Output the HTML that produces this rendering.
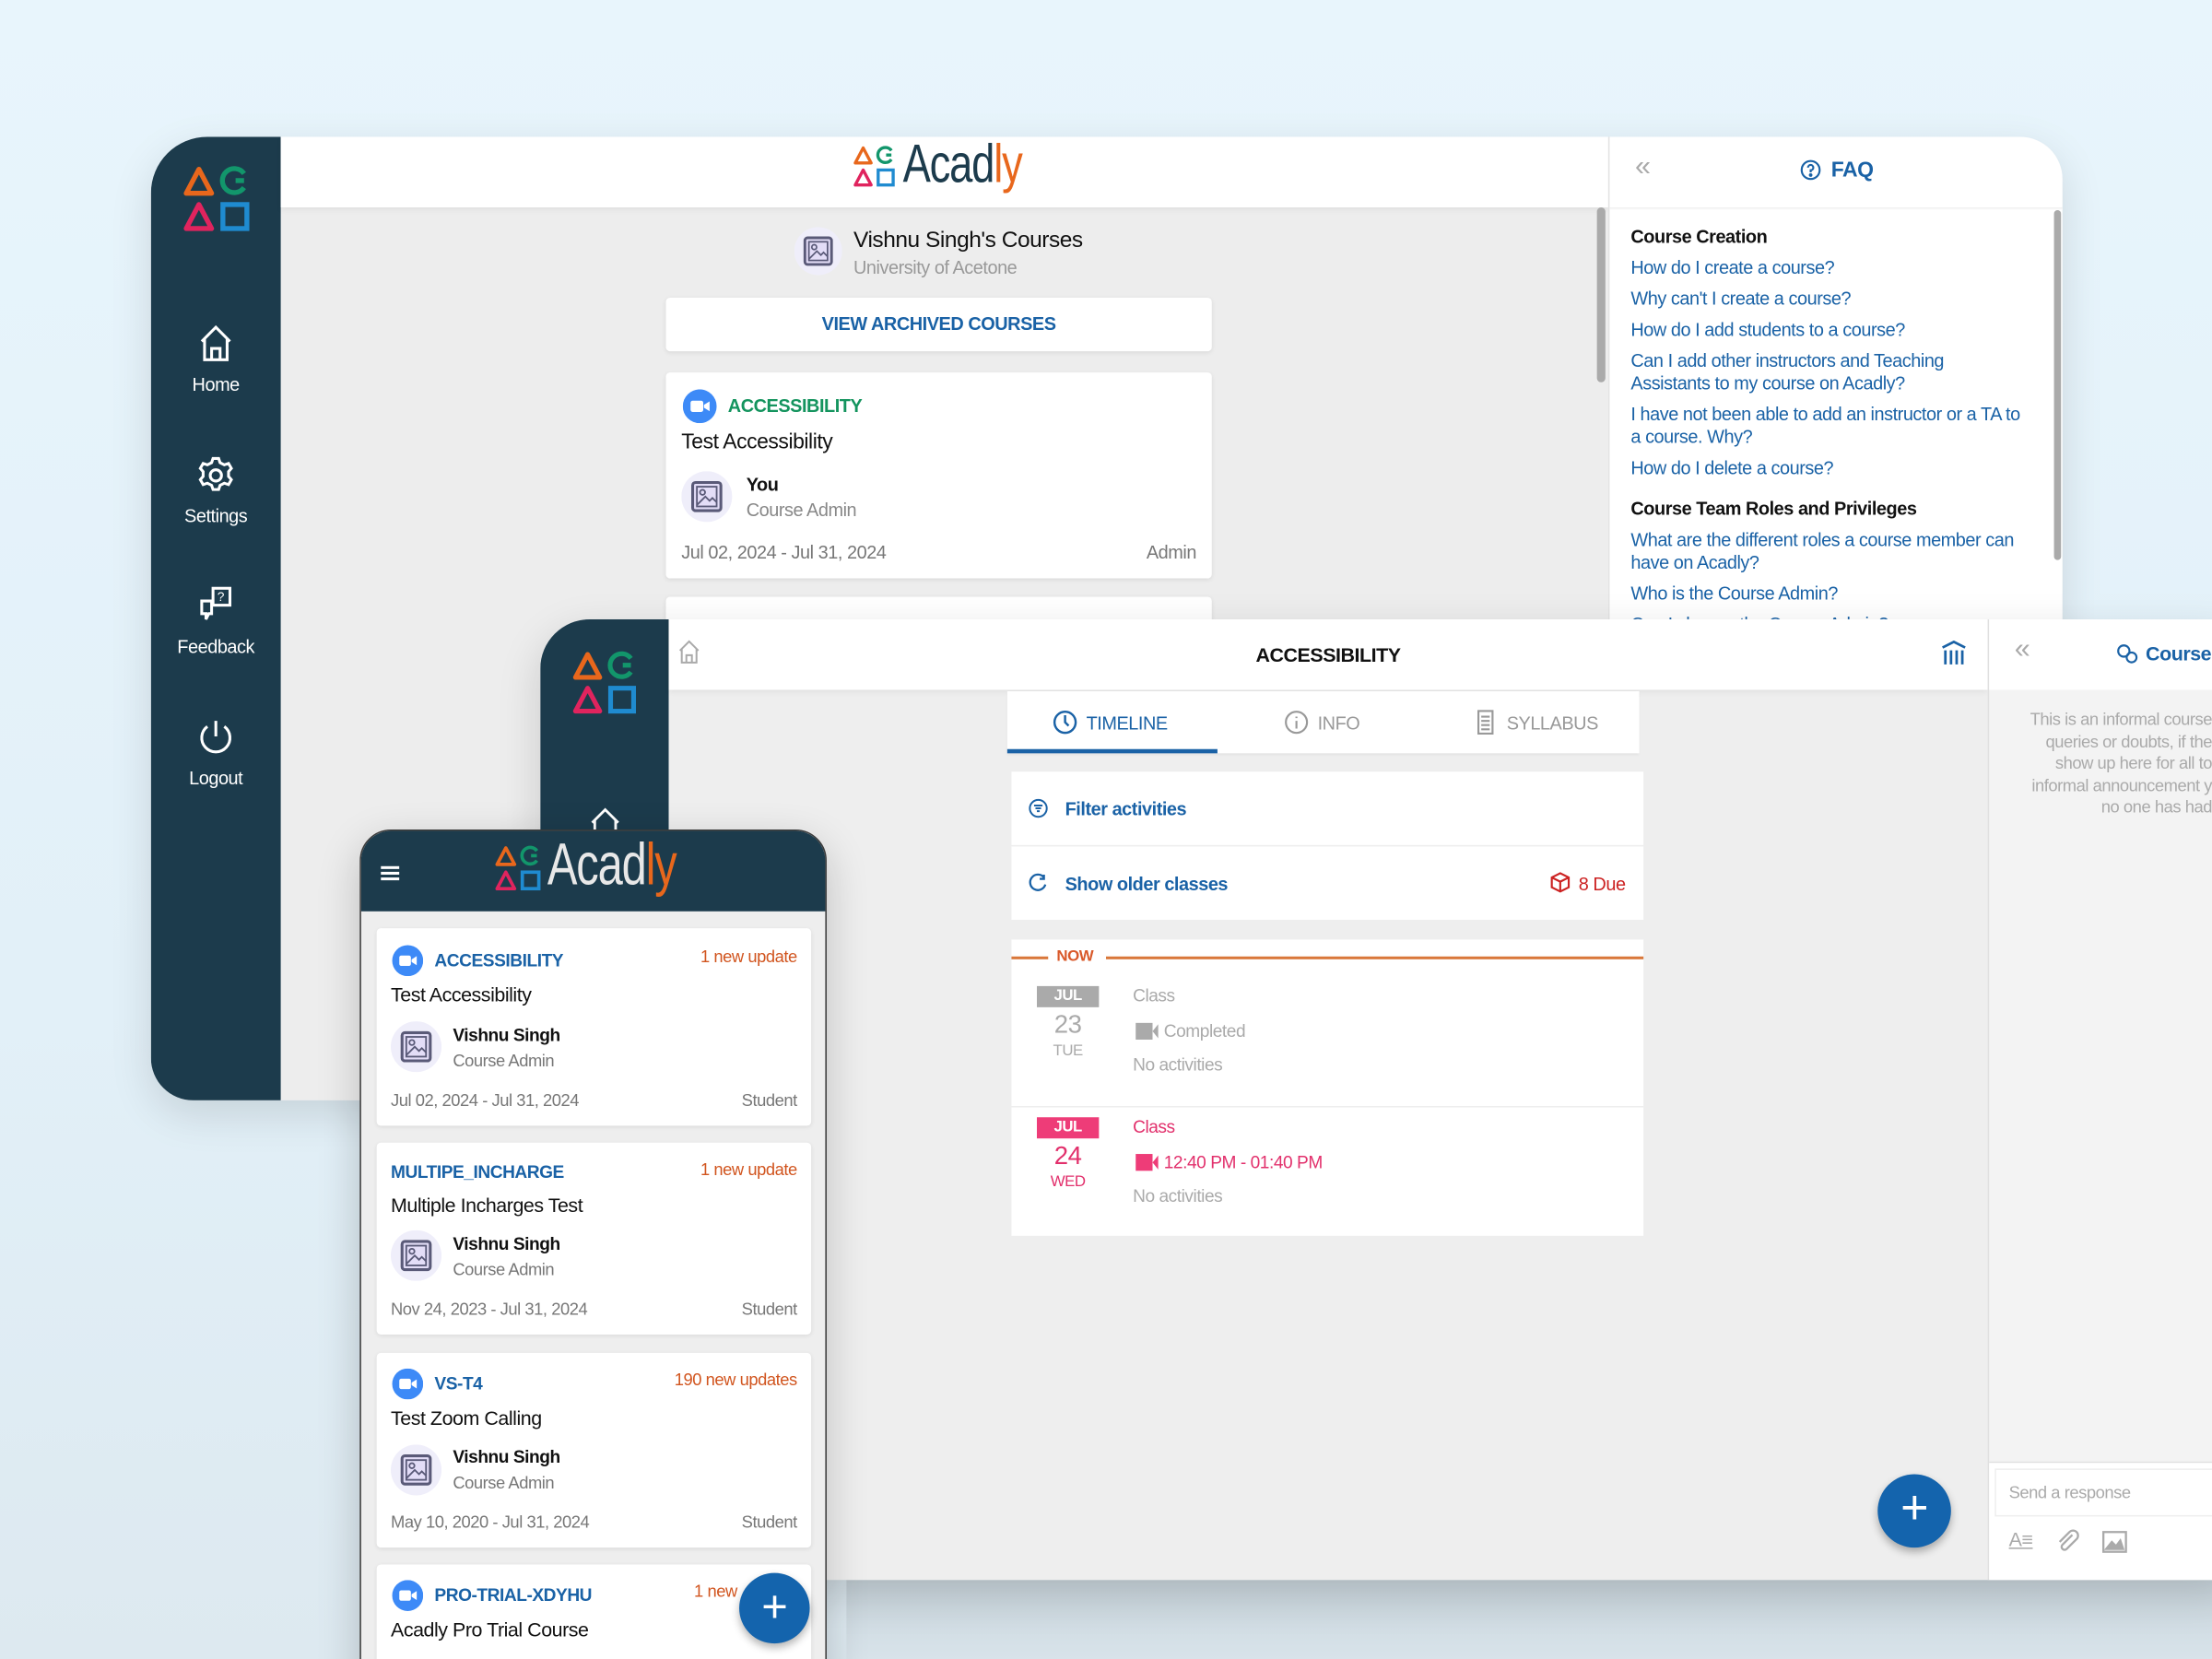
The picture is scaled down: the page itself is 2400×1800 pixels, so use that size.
<!DOCTYPE html>
<html><head><meta charset="utf-8">
<style>
*{margin:0;padding:0;box-sizing:border-box}
html,body{width:2400px;height:1800px;overflow:hidden}
body{background:linear-gradient(180deg,#e8f5fc 0%,#e2f0f8 60%,#dde9f0 100%);font-family:"Liberation Sans",sans-serif}
#s{position:absolute;left:0;top:0;width:1568px;height:1176px;overflow:hidden;transform:scale(1.530612);transform-origin:0 0}
.a{position:absolute}
.t{position:absolute;white-space:nowrap;letter-spacing:-.3px}
.blue{color:#1a62a6}
.card{position:absolute;background:#fff;border-radius:3px;box-shadow:0 1px 3px rgba(0,0,0,.08)}
.lbl{color:#fff;font-size:13px;width:92px;text-align:center}
.faq{position:absolute;left:15px;color:#1a62a6;font-size:13px;line-height:16px;width:282px;letter-spacing:-.3px}
.faqh{position:absolute;left:15px;color:#111;font-size:13px;font-weight:bold;letter-spacing:-.3px}
</style></head><body>
<svg width="0" height="0" style="position:absolute">
<defs>
<symbol id="logo" viewBox="0 0 48 48">
<path d="M11 3 L20 20 L2 20 Z" fill="none" stroke="#e8671c" stroke-width="3.5" stroke-linejoin="round"/>
<path d="M43 6 A8.5 8.5 0 1 0 43 16 M37 11 L43 11" fill="none" stroke="#12966b" stroke-width="3.5"/>
<path d="M11 28 L20 45 L2 45 Z" fill="none" stroke="#e0245e" stroke-width="3.5" stroke-linejoin="round"/>
<rect x="28" y="28" width="17" height="17" fill="none" stroke="#1f8bd0" stroke-width="3.5"/>
</symbol>
<symbol id="img" viewBox="0 0 36 36">
<circle cx="18" cy="18" r="18" fill="#efeefa"/>
<rect x="8" y="8" width="20" height="20" rx="2" fill="#e3ddf7" stroke="#5a5a78" stroke-width="2"/>
<rect x="11" y="11" width="14" height="14" fill="none" stroke="#5a5a78" stroke-width="1.2"/>
<circle cx="15" cy="15" r="1.8" fill="none" stroke="#5a5a78" stroke-width="1.2"/>
<path d="M11 24 L17 18 L20 21 L22 19 L25 22" fill="none" stroke="#5a5a78" stroke-width="1.2"/>
</symbol>
<symbol id="zoom" viewBox="0 0 24 24">
<circle cx="12" cy="12" r="12" fill="#3d8af7"/>
<rect x="5.5" y="8" width="9" height="8" rx="1.5" fill="#fff"/>
<path d="M15 11 L19 8.5 L19 15.5 L15 13 Z" fill="#fff"/>
</symbol>
</defs>
</svg>
<div id="s">
<div class="a" style="left:600px;top:1120px;width:968px;height:56px;background:linear-gradient(180deg,#c9d5dc,#d8e3ea)"></div>

<!-- BACK TABLET -->
<div class="a" style="left:107px;top:97px;width:1355px;height:683px;border-radius:40px 30px 0 30px;overflow:hidden;background:#ededed;box-shadow:0 10px 30px rgba(0,0,0,.12)">
  <div class="a" style="left:0;top:0;width:92px;height:683px;background:#1c3b4c"></div>
  <svg class="a" style="left:23px;top:20px" width="48" height="48"><use href="#logo"/></svg>
  <svg class="a" style="left:33px;top:133px" width="26" height="28" viewBox="0 0 26 28" fill="none" stroke="#fff" stroke-width="2"><path d="M3 12 L13 2 L23 12 M5 10 V25 H21 V10 M10 25 V17 H16 V25"/></svg>
  <div class="t lbl" style="left:0;top:168px">Home</div>
  <svg class="a" style="left:32px;top:226px" width="28" height="28" viewBox="0 0 28 28" fill="none" stroke="#fff" stroke-width="2"><circle cx="14" cy="14" r="4"/><path d="M12 2h4l1 3 3 1.5 3-1 2 3.5-2 2.3v3.4l2 2.3-2 3.5-3-1-3 1.5-1 3h-4l-1-3-3-1.5-3 1-2-3.5 2-2.3v-3.4l-2-2.3 2-3.5 3 1 3-1.5z"/></svg>
  <div class="t lbl" style="left:0;top:261px">Settings</div>
  <svg class="a" style="left:33px;top:318px" width="26" height="28" viewBox="0 0 26 28" fill="none" stroke="#fff" stroke-width="2"><rect x="11" y="2" width="12" height="12"/><path d="M3 11 H10 V20 H8 L6 24 V20 H3 Z"/><text x="14" y="11" font-size="9" fill="#fff" stroke="none" font-family="Liberation Sans">?</text></svg>
  <div class="t lbl" style="left:0;top:354px">Feedback</div>
  <svg class="a" style="left:33px;top:412px" width="26" height="28" viewBox="0 0 26 28" fill="none" stroke="#fff" stroke-width="2"><path d="M13 2 V13 M7 6 A10 10 0 1 0 19 6"/></svg>
  <div class="t lbl" style="left:0;top:447px">Logout</div>
  <div class="a" style="left:92px;top:0;width:941px;height:50px;background:#fff;box-shadow:0 2px 4px rgba(0,0,0,.06)"></div>
  <svg class="a" style="left:498px;top:6px" width="30" height="30"><use href="#logo"/></svg>
  <div class="t" style="left:533px;top:-1px;font-size:38px;color:#1c3b4c;letter-spacing:-1px;transform:scaleX(.78);transform-origin:0 0">Acad<span style="color:#e8671c">ly</span></div>
  <svg class="a" style="left:456px;top:64px" width="34" height="34"><use href="#img"/></svg>
  <div class="t" style="left:498px;top:65px;font-size:16px;color:#111">Vishnu Singh's Courses</div>
  <div class="t" style="left:498px;top:85px;font-size:13px;color:#999">University of Acetone</div>
  <div class="card" style="left:365px;top:114px;width:387px;height:38px"></div>
  <div class="t blue" style="left:365px;top:125px;width:387px;text-align:center;font-size:13px;font-weight:bold">VIEW ARCHIVED COURSES</div>
  <div class="card" style="left:365px;top:167px;width:387px;height:146px">
    <svg class="a" style="left:12px;top:12px" width="24" height="24"><use href="#zoom"/></svg>
    <div class="t" style="left:44px;top:16px;font-size:13px;font-weight:bold;color:#14945e">ACCESSIBILITY</div>
    <div class="t" style="left:11px;top:41px;font-size:15px;color:#111">Test Accessibility</div>
    <svg class="a" style="left:11px;top:70px" width="36" height="36"><use href="#img"/></svg>
    <div class="t" style="left:57px;top:72px;font-size:13px;font-weight:bold;color:#111">You</div>
    <div class="t" style="left:57px;top:90px;font-size:13px;color:#888">Course Admin</div>
    <div class="t" style="left:11px;top:120px;font-size:13px;color:#777">Jul 02, 2024 - Jul 31, 2024</div>
    <div class="t" style="right:11px;top:120px;font-size:13px;color:#777">Admin</div>
  </div>
  <div class="card" style="left:365px;top:326px;width:387px;height:60px"></div>
  <div class="a" style="left:1025px;top:50px;width:6px;height:124px;background:#aaa;border-radius:3px"></div>
  <div class="a" style="left:1033px;top:0;width:322px;height:683px;background:#fff;border-left:1px solid #e3e3e3">
    <div class="a" style="left:0;top:50px;width:322px;height:2px;background:linear-gradient(#eee,#fff)"></div>
    <div class="t" style="left:18px;top:10px;font-size:20px;color:#aaa">«</div>
    <svg class="a" style="left:135px;top:16px" width="15" height="15" viewBox="0 0 16 16" fill="none" stroke="#1a62a6" stroke-width="1.5"><circle cx="8" cy="8" r="6.8"/><path d="M6 6.2 A2 2 0 1 1 8 8.2 V9.8"/><circle cx="8" cy="11.8" r=".6" fill="#1a62a6"/></svg>
    <div class="t blue" style="left:157px;top:15px;font-size:15px;font-weight:bold">FAQ</div>
    <div class="faqh" style="top:63px">Course Creation</div>
    <div class="faq" style="top:85px">How do I create a course?</div>
    <div class="faq" style="top:107px">Why can't I create a course?</div>
    <div class="faq" style="top:129px">How do I add students to a course?</div>
    <div class="faq" style="top:151px">Can I add other instructors and Teaching<br>Assistants to my course on Acadly?</div>
    <div class="faq" style="top:189px">I have not been able to add an instructor or a TA to<br>a course. Why?</div>
    <div class="faq" style="top:227px">How do I delete a course?</div>
    <div class="faqh" style="top:256px">Course Team Roles and Privileges</div>
    <div class="faq" style="top:278px">What are the different roles a course member can<br>have on Acadly?</div>
    <div class="faq" style="top:316px">Who is the Course Admin?</div>
    <div class="faq" style="top:338px">Can I change the Course Admin?</div>
    <div class="a" style="left:315px;top:52px;width:5px;height:248px;background:#aaa;border-radius:3px"></div>
  </div>
</div>

<!-- FRONT TABLET -->
<div class="a" style="left:383px;top:439px;width:1200px;height:681px;border-radius:35px 0 0 0;overflow:hidden;background:#eeeeee;box-shadow:0 10px 30px rgba(0,0,0,.15)">
  <div class="a" style="left:0;top:0;width:91px;height:681px;background:#1c3b4c"></div>
  <svg class="a" style="left:23px;top:22px" width="46" height="46"><use href="#logo"/></svg>
  <svg class="a" style="left:34px;top:133px" width="24" height="26" viewBox="0 0 26 28" fill="none" stroke="#fff" stroke-width="2"><path d="M3 12 L13 2 L23 12 M5 10 V25 H21 V10"/></svg>
  <div class="a" style="left:91px;top:0;width:935px;height:50px;background:#fff;box-shadow:0 2px 4px rgba(0,0,0,.06)"></div>
  <svg class="a" style="left:97px;top:14px" width="17" height="19" viewBox="0 0 26 28" fill="none" stroke="#aaa" stroke-width="2"><path d="M3 12 L13 2 L23 12 M5 10 V25 H21 V10 M10 25 V17 H16 V25"/></svg>
  <div class="t" style="left:91px;top:17px;width:935px;text-align:center;font-size:14px;font-weight:bold;color:#111">ACCESSIBILITY</div>
  <svg class="a" style="left:993px;top:15px" width="18" height="18" viewBox="0 0 18 18" fill="none" stroke="#1a62a6" stroke-width="1.8"><path d="M1 5 L9 1 L17 5 M3 7 V17 M7 7 V17 M11 7 V17 M15 7 V17"/></svg>
  <div class="a" style="left:331px;top:51px;width:448px;height:44px;background:#fff;box-shadow:0 1px 2px rgba(0,0,0,.06)"></div>
  <div class="a" style="left:331px;top:92px;width:149px;height:3px;background:#1a62a6"></div>
  <svg class="a" style="left:363px;top:64px" width="18" height="18" viewBox="0 0 18 18" fill="none" stroke="#1a62a6" stroke-width="1.6"><circle cx="9" cy="9" r="7.5"/><path d="M9 4 V9 L11.5 11.5"/></svg>
  <div class="t blue" style="left:387px;top:66px;font-size:13px">TIMELINE</div>
  <svg class="a" style="left:527px;top:64px" width="18" height="18" viewBox="0 0 18 18" fill="none" stroke="#999" stroke-width="1.4"><circle cx="9" cy="9" r="7.5"/><path d="M9 8 V13.5 M9 5 V6"/></svg>
  <div class="t" style="left:551px;top:66px;font-size:13px;color:#999">INFO</div>
  <svg class="a" style="left:663px;top:64px" width="14" height="18" viewBox="0 0 14 18" fill="none" stroke="#999" stroke-width="1.4"><rect x="2" y="1" width="10" height="16"/><path d="M4 5 H10 M4 8 H10 M4 11 H10 M4 14 H10"/></svg>
  <div class="t" style="left:685px;top:66px;font-size:13px;color:#999">SYLLABUS</div>
  <div class="a" style="left:334px;top:108px;width:448px;height:52px;background:#fff"></div>
  <div class="a" style="left:334px;top:161px;width:448px;height:52px;background:#fff"></div>
  <svg class="a" style="left:346px;top:127px" width="14" height="14" viewBox="0 0 14 14" fill="none" stroke="#1a62a6" stroke-width="1.3"><circle cx="7" cy="7" r="6"/><path d="M4 5 H10 M5 7 H9 M6 9 H8"/></svg>
  <div class="t blue" style="left:372px;top:127px;font-size:13px;font-weight:bold">Filter activities</div>
  <svg class="a" style="left:346px;top:180px" width="14" height="14" viewBox="0 0 14 14" fill="none" stroke="#1a62a6" stroke-width="1.5"><path d="M11 3 A5.5 5.5 0 1 0 12 8 M11 1 V4 H8"/></svg>
  <div class="t blue" style="left:372px;top:180px;font-size:13px;font-weight:bold">Show older classes</div>
  <svg class="a" style="left:716px;top:179px" width="14" height="15" viewBox="0 0 14 15" fill="none" stroke="#cc2222" stroke-width="1.4"><path d="M7 1 L13 4 V11 L7 14 L1 11 V4 Z M1 4 L7 7 L13 4 M7 7 V14"/></svg>
  <div class="t" style="left:736px;top:180px;font-size:13px;color:#cc2222">8 Due</div>
  <div class="a" style="left:334px;top:227px;width:448px;height:210px;background:#fff"></div>
  <div class="a" style="left:334px;top:239px;width:26px;height:1.5px;background:#d9773a"></div>
  <div class="t" style="left:366px;top:233px;font-size:11px;font-weight:bold;color:#d9592a">NOW</div>
  <div class="a" style="left:401px;top:239px;width:381px;height:1.5px;background:#d9773a"></div>
  <div class="a" style="left:352px;top:260px;width:44px;height:15px;background:#aaa"></div>
  <div class="t" style="left:352px;top:261px;width:44px;text-align:center;font-size:11px;color:#fff;font-weight:bold">JUL</div>
  <div class="t" style="left:352px;top:277px;width:44px;text-align:center;font-size:18px;color:#aaa">23</div>
  <div class="t" style="left:352px;top:300px;width:44px;text-align:center;font-size:11px;color:#aaa">TUE</div>
  <div class="t" style="left:420px;top:260px;font-size:12.5px;color:#aaa">Class</div>
  <svg class="a" style="left:422px;top:286px" width="18" height="12" viewBox="0 0 18 12"><rect x="0" y="0" width="12" height="12" fill="#aaa"/><path d="M12 6 L16 1 V11 Z" fill="#aaa"/></svg>
  <div class="t" style="left:442px;top:285px;font-size:12.5px;color:#aaa">Completed</div>
  <div class="t" style="left:420px;top:309px;font-size:12.5px;color:#aaa">No activities</div>
  <div class="a" style="left:334px;top:345px;width:448px;height:1px;background:#eee"></div>
  <div class="a" style="left:352px;top:353px;width:44px;height:15px;background:#ee3c78"></div>
  <div class="t" style="left:352px;top:354px;width:44px;text-align:center;font-size:11px;color:#fff;font-weight:bold">JUL</div>
  <div class="t" style="left:352px;top:370px;width:44px;text-align:center;font-size:18px;color:#e2306c">24</div>
  <div class="t" style="left:352px;top:393px;width:44px;text-align:center;font-size:11px;color:#e2306c">WED</div>
  <div class="t" style="left:420px;top:353px;font-size:12.5px;color:#e2306c">Class</div>
  <svg class="a" style="left:422px;top:379px" width="18" height="12" viewBox="0 0 18 12"><rect x="0" y="0" width="12" height="12" fill="#ee3c78"/><path d="M12 6 L16 1 V11 Z" fill="#ee3c78"/></svg>
  <div class="t" style="left:442px;top:378px;font-size:12.5px;color:#e2306c">12:40 PM - 01:40 PM</div>
  <div class="t" style="left:420px;top:402px;font-size:12.5px;color:#aaa">No activities</div>
  <div class="a" style="left:948px;top:606px;width:52px;height:52px;border-radius:50%;background:#1464ad;box-shadow:0 3px 6px rgba(0,0,0,.3)"></div>
  <div class="t" style="left:948px;top:610px;width:52px;text-align:center;font-size:34px;color:#fff;line-height:40px">+</div>
  <div class="a" style="left:1026px;top:0;width:180px;height:681px;background:#f3f3f3;border-left:1px solid #e0e0e0">
    <div class="a" style="left:0;top:0;width:180px;height:50px;background:#fff"></div>
    <div class="t" style="left:18px;top:10px;font-size:20px;color:#aaa">«</div>
    <svg class="a" style="left:90px;top:17px" width="16" height="15" viewBox="0 0 16 15" fill="none" stroke="#1a62a6" stroke-width="1.4"><circle cx="5.5" cy="5.5" r="4"/><circle cx="11" cy="10" r="3.5"/></svg>
    <div class="t blue" style="left:111px;top:16px;font-size:14px;font-weight:bold">Course</div>
    <div class="t" style="right:21px;top:64px;font-size:12px;line-height:15.5px;color:#aaa;text-align:right">This is an informal course<br>queries or doubts, if the<br>show up here for all to<br>informal announcement y<br>no one has had</div>
    <div class="a" style="left:0;top:597px;width:180px;height:84px;background:#fff;border-top:1px solid #e0e0e0"></div>
    <div class="a" style="left:4px;top:602px;width:176px;height:34px;border:1px solid #eee;background:#fff"></div>
    <div class="t" style="left:14px;top:612px;font-size:12px;color:#aaa">Send a response</div>
    <div class="t" style="left:14px;top:644px;font-size:14px;color:#aaa;text-decoration:underline">A&#8801;</div>
    <svg class="a" style="left:47px;top:645px" width="18" height="18" viewBox="0 0 18 18" fill="none" stroke="#aaa" stroke-width="1.5"><path d="M12 4 L5 11 A2 2 0 0 0 8 14 L15 7 A3.5 3.5 0 0 0 10 2 L3 9"/></svg>
    <svg class="a" style="left:80px;top:646px" width="18" height="16" viewBox="0 0 18 16" fill="none" stroke="#aaa" stroke-width="1.5"><rect x="1" y="1" width="16" height="14"/><path d="M3 13 L7 8 L10 11 L13 7 L15 13 Z" fill="#aaa"/></svg>
  </div>
</div>

<!-- PHONE -->
<div class="a" style="left:255px;top:588px;width:331px;height:620px;border-radius:22px;overflow:hidden;background:#eeeeee;border:1.5px solid #3a3a3a;box-shadow:0 10px 30px rgba(0,0,0,.2)">
  <div class="a" style="left:0;top:0;width:331px;height:57px;background:#1c3b4c"></div>
  <div class="a" style="left:14px;top:25px;width:13px;height:2px;background:#fff;box-shadow:0 4px 0 #fff,0 8px 0 #fff"></div>
  <svg class="a" style="left:95px;top:10px" width="33" height="33"><use href="#logo"/></svg>
  <div class="t" style="left:132px;top:0px;font-size:42px;color:#e8e8e8;transform:scaleX(.76);transform-origin:0 0;letter-spacing:-1px">Acad<span style="color:#e8671c">ly</span></div>
  <div class="card" style="left:11px;top:69px;width:308px;height:140px">
    <svg class="a" style="left:11px;top:12px" width="22" height="22"><use href="#zoom"/></svg>
    <div class="t blue" style="left:41px;top:16px;font-size:12.5px;font-weight:bold">ACCESSIBILITY</div>
    <div class="t" style="right:10px;top:13px;font-size:12px;color:#d1551f">1 new update</div>
    <div class="t" style="left:10px;top:39px;font-size:14px;color:#111">Test Accessibility</div>
    <svg class="a" style="left:10px;top:66px" width="36" height="36"><use href="#img"/></svg>
    <div class="t" style="left:54px;top:69px;font-size:12.5px;font-weight:bold;color:#111">Vishnu Singh</div>
    <div class="t" style="left:54px;top:87px;font-size:12px;color:#777">Course Admin</div>
    <div class="t" style="left:10px;top:115px;font-size:12px;color:#777">Jul 02, 2024 - Jul 31, 2024</div>
    <div class="t" style="right:10px;top:115px;font-size:12px;color:#777">Student</div>
  </div>
  <div class="card" style="left:11px;top:221px;width:308px;height:136px">
    <div class="t blue" style="left:10px;top:14px;font-size:12.5px;font-weight:bold">MULTIPE_INCHARGE</div>
    <div class="t" style="right:10px;top:12px;font-size:12px;color:#d1551f">1 new update</div>
    <div class="t" style="left:10px;top:36px;font-size:14px;color:#111">Multiple Incharges Test</div>
    <svg class="a" style="left:10px;top:62px" width="36" height="36"><use href="#img"/></svg>
    <div class="t" style="left:54px;top:65px;font-size:12.5px;font-weight:bold;color:#111">Vishnu Singh</div>
    <div class="t" style="left:54px;top:83px;font-size:12px;color:#777">Course Admin</div>
    <div class="t" style="left:10px;top:111px;font-size:12px;color:#777">Nov 24, 2023 - Jul 31, 2024</div>
    <div class="t" style="right:10px;top:111px;font-size:12px;color:#777">Student</div>
  </div>
  <div class="card" style="left:11px;top:370px;width:308px;height:138px">
    <svg class="a" style="left:11px;top:11px" width="22" height="22"><use href="#zoom"/></svg>
    <div class="t blue" style="left:41px;top:15px;font-size:12.5px;font-weight:bold">VS-T4</div>
    <div class="t" style="right:10px;top:12px;font-size:12px;color:#d1551f">190 new updates</div>
    <div class="t" style="left:10px;top:38px;font-size:14px;color:#111">Test Zoom Calling</div>
    <svg class="a" style="left:10px;top:65px" width="36" height="36"><use href="#img"/></svg>
    <div class="t" style="left:54px;top:67px;font-size:12.5px;font-weight:bold;color:#111">Vishnu Singh</div>
    <div class="t" style="left:54px;top:85px;font-size:12px;color:#777">Course Admin</div>
    <div class="t" style="left:10px;top:113px;font-size:12px;color:#777">May 10, 2020 - Jul 31, 2024</div>
    <div class="t" style="right:10px;top:113px;font-size:12px;color:#777">Student</div>
  </div>
  <div class="card" style="left:11px;top:520px;width:308px;height:120px">
    <svg class="a" style="left:11px;top:11px" width="22" height="22"><use href="#zoom"/></svg>
    <div class="t blue" style="left:41px;top:15px;font-size:12.5px;font-weight:bold">PRO-TRIAL-XDYHU</div>
    <div class="t" style="left:225px;top:12px;font-size:12px;color:#d1551f">1 new</div>
    <div class="t" style="left:10px;top:38px;font-size:14px;color:#111">Acadly Pro Trial Course</div>
  </div>
  <div class="a" style="left:268px;top:526px;width:50px;height:50px;border-radius:50%;background:#1464ad;box-shadow:0 3px 6px rgba(0,0,0,.3)"></div>
  <div class="t" style="left:268px;top:530px;width:50px;text-align:center;font-size:32px;color:#fff;line-height:40px">+</div>
</div>

</div>
</body></html>
